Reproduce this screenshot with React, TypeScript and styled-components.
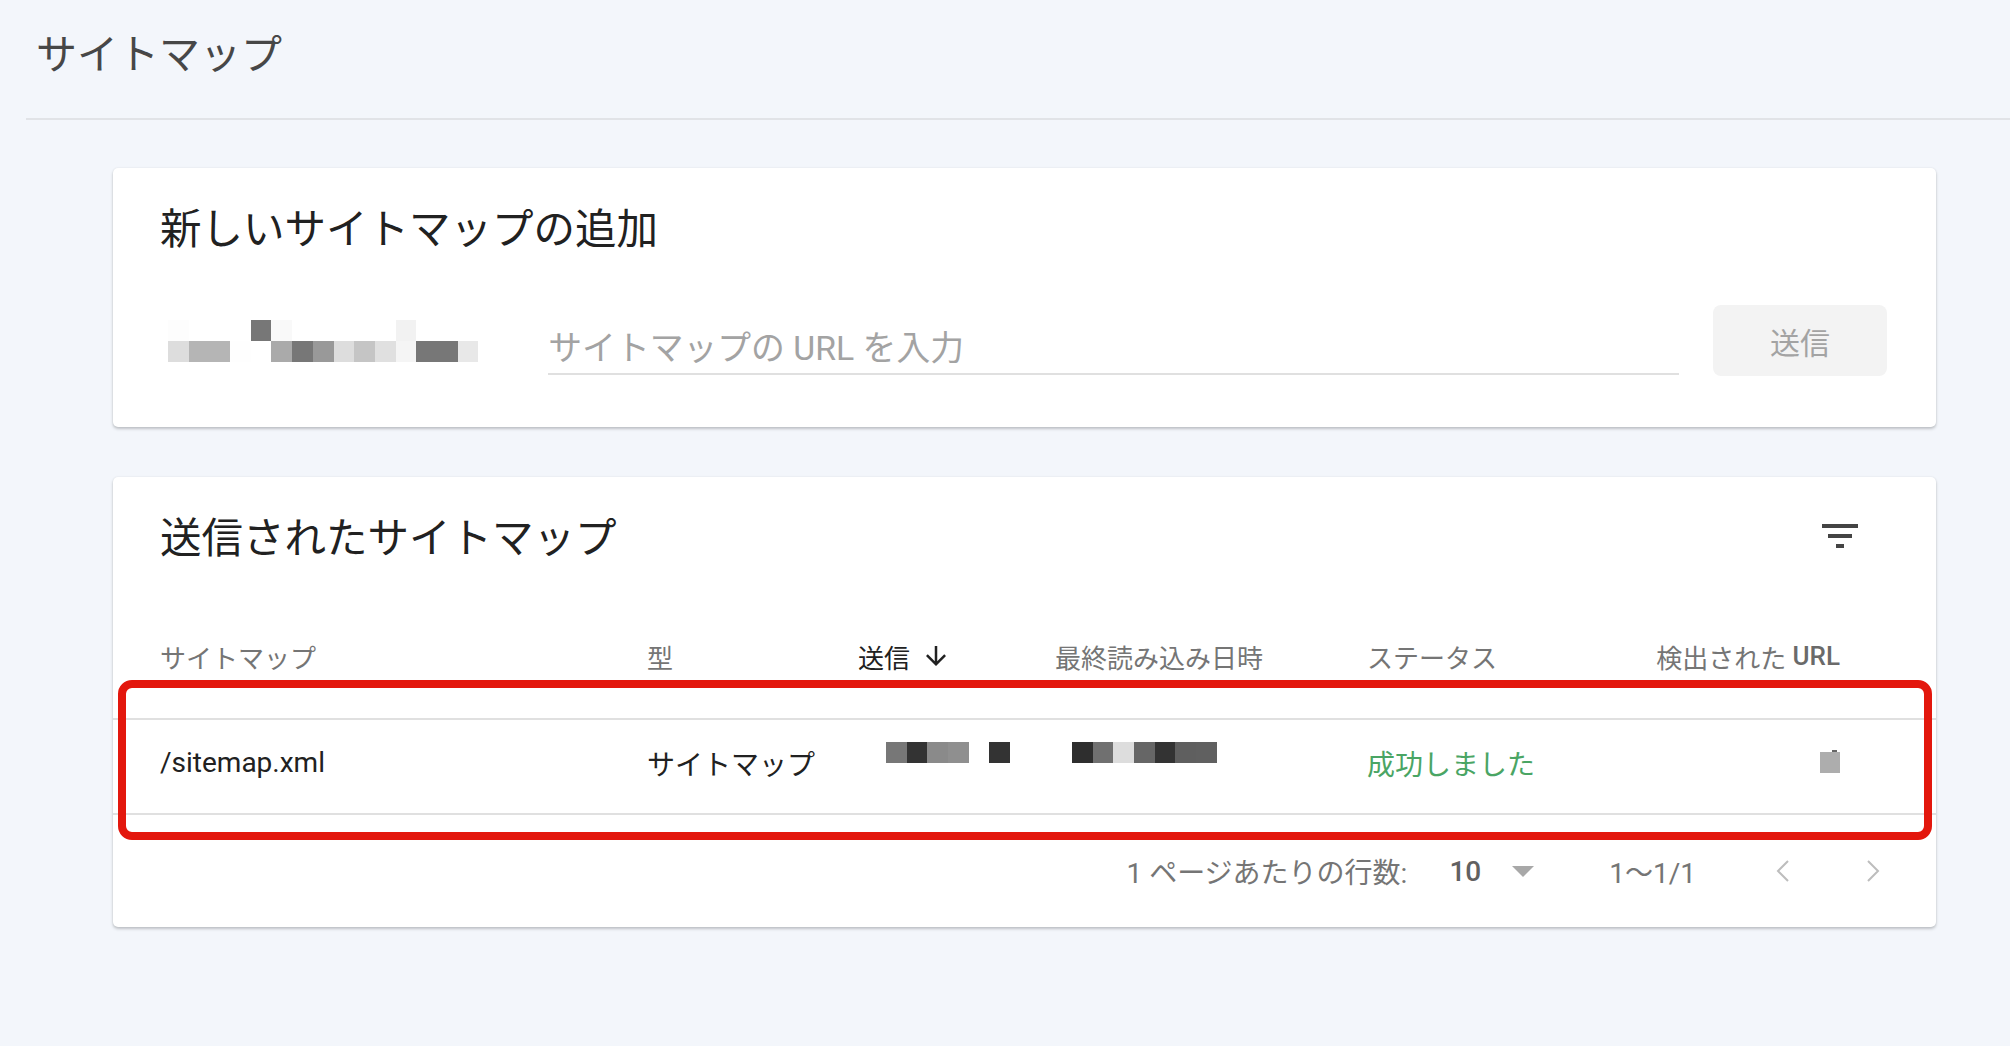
import React from "react";
import styled, { createGlobalStyle } from "styled-components";

const GlobalStyle = createGlobalStyle`
  body {
    margin: 0;
    background: #f3f6fb;
    font-family: Roboto, "Noto Sans CJK JP", sans-serif;
  }
`;

// blurred domain name in the "add" card, two rows of pixels
const domainRows = [
  ["#fdfdfd", "#fff", "#fff", "#fff", "#777", "#f9f9f9", "#fff", "#fff", "#fff", "#fff", "#fff", "#f2f2f2", "#fff", "#fff", "#fff"],
  ["#ddd", "#b5b5b5", "#b5b5b5", "#fefefe", "#fff", "#aaa", "#777", "#999", "#ddd", "#c5c5c5", "#e0e0e0", "#f5f5f5", "#777", "#777", "#e8e8e8"],
];

const sentPixels = ["#777", "#333", "#8a8a8a", "#8f8f8f", "#fff", "#333"];
const readPixels = ["#2e2e2e", "#707070", "#ddd", "#666", "#333", "#5f5f5f", "#606060"];

const columns = ["サイトマップ", "型", "送信", "最終読み込み日時", "ステータス"];

function App() {
  return (
    <Page>
      <GlobalStyle />
      <TopBar>
        <PageTitle>サイトマップ</PageTitle>
      </TopBar>

      <Main>
        <AddCard>
          <CardTitle>新しいサイトマップの追加</CardTitle>
          <InputRow>
            <Mosaic $cols={15}>
              {domainRows.flat().map((c, i) => (
                <Pixel key={i} $color={c} />
              ))}
            </Mosaic>
            <UrlInput placeholder="サイトマップの URL を入力" />
            <SubmitButton>送信</SubmitButton>
          </InputRow>
        </AddCard>

        <ListCard>
          <ListHeader>
            <CardTitle>送信されたサイトマップ</CardTitle>
            <FilterIcon viewBox="0 0 24 24">
              <path d="M10 18h4v-2h-4v2zM3 6v2h18V6H3zm3 7h12v-2H6v2z" />
            </FilterIcon>
          </ListHeader>

          <Row $height={118}>
            {columns.map((c) => (
              <HeadCell key={c} $active={c === "送信"}>
                {c}
                {c === "送信" && (
                  <SortArrow viewBox="0 0 24 24">
                    <path d="M20 12l-1.41-1.41L13 16.17V4h-2v12.17l-5.58-5.59L4 12l8 8 8-8z" />
                  </SortArrow>
                )}
              </HeadCell>
            ))}
            <HeadCell $active={false}>
              検出された <Strong>URL</Strong>
            </HeadCell>
          </Row>

          <Row $height={95}>
            <Cell>/sitemap.xml</Cell>
            <Cell>サイトマップ</Cell>
            <Cell>
              <Mosaic $cols={sentPixels.length} $offset={28} $lift>
                {sentPixels.map((c, i) => (
                  <Pixel key={i} $color={c} />
                ))}
              </Mosaic>
            </Cell>
            <Cell>
              <Mosaic $cols={readPixels.length} $offset={17} $lift>
                {readPixels.map((c, i) => (
                  <Pixel key={i} $color={c} />
                ))}
              </Mosaic>
            </Cell>
            <Status>成功しました</Status>
            <Cell>
              <CountBlock />
            </Cell>
          </Row>

          <Pager>
            <span>1 ページあたりの行数:</span>
            <PerPage>10</PerPage>
            <DropTriangle viewBox="0 0 22 11">
              <polygon points="0,0 22,0 11,11" />
            </DropTriangle>
            <Range>1〜1/1</Range>
            <Chevron viewBox="0 0 16 22" $gap={79}>
              <polyline points="13,1 3,11 13,21" />
            </Chevron>
            <Chevron viewBox="0 0 16 22" $gap={74}>
              <polyline points="3,1 13,11 3,21" />
            </Chevron>
          </Pager>

          <Highlight />
        </ListCard>
      </Main>
    </Page>
  );
}

const Page = styled.div`
  min-height: 1046px;
`;

const TopBar = styled.header`
  margin-left: 26px;
  height: 120px;
  box-sizing: border-box;
  padding: 31px 0 0 10px;
  border-bottom: 2px solid #e1e3e7;
`;

const PageTitle = styled.h1`
  margin: 0;
  font-size: 41px;
  font-weight: 400;
  line-height: 48px;
  color: #474747;
`;

const Main = styled.main`
  display: flex;
  flex-direction: column;
  gap: 50px;
  padding: 48px 74px 0 113px;
`;

const Card = styled.section`
  position: relative;
  background: #fff;
  border-radius: 5px;
  box-shadow: 0 2px 3px rgba(60, 64, 67, 0.28), 0 0 2px rgba(60, 64, 67, 0.1);
`;

const AddCard = styled(Card)`
  padding: 36px 49px 51px 47px;
`;

const CardTitle = styled.h2`
  margin: 0;
  font-size: 41.5px;
  font-weight: 400;
  line-height: 52px;
  color: #212121;
`;

const InputRow = styled.div`
  display: flex;
  align-items: center;
  height: 71px;
  margin-top: 49px;
`;

const Mosaic = styled.div<{ $cols: number; $offset?: number; $lift?: boolean }>`
  display: grid;
  grid-template-columns: repeat(${(p) => p.$cols}, 20.7px);
  grid-auto-rows: 21px;
  margin-left: ${(p) => p.$offset ?? 8}px;
  margin-bottom: ${(p) => (p.$lift ? 20 : 0)}px;
`;

const Pixel = styled.span<{ $color: string }>`
  background: ${(p) => p.$color};
`;

const UrlInput = styled.input`
  flex: 1;
  height: 48px;
  margin: 18px 0 0 70px;
  padding: 0;
  border: none;
  border-bottom: 2px solid #e0e0e0;
  outline: none;
  background: transparent;
  font-family: inherit;
  font-size: 33.8px;
  color: #212121;

  &::placeholder {
    color: #a3a3a3;
  }
`;

const SubmitButton = styled.button`
  width: 174px;
  height: 71px;
  margin-left: 34px;
  border: none;
  border-radius: 8px;
  background: #f3f3f3;
  color: #a3a3a3;
  font-family: inherit;
  font-size: 30px;
`;

const ListCard = styled(Card)``;

const ListHeader = styled.div`
  display: flex;
  justify-content: space-between;
  align-items: center;
  padding: 36px 72px 37px 47px;
`;

const FilterIcon = styled.svg`
  width: 48px;
  height: 48px;
  margin-top: -6px;
  fill: #444;
`;

const Row = styled.div<{ $height: number }>`
  display: grid;
  grid-template-columns: 487px 211px 197px 312px 1fr auto;
  align-items: center;
  height: ${(p) => p.$height}px;
  box-sizing: border-box;
  padding: 0 96px 8px 47px;
  border-bottom: 2px solid #e0e0e0;
`;

const HeadCell = styled.div<{ $active: boolean }>`
  display: flex;
  align-items: center;
  white-space: pre;
  font-size: 26px;
  color: ${(p) => (p.$active ? "#212121" : "#757575")};
`;

const Strong = styled.span`
  font-weight: 500;
  color: #6a6a6a;
`;

const SortArrow = styled.svg`
  width: 30px;
  height: 30px;
  margin-left: 11px;
  fill: #212121;
`;

const Cell = styled.div`
  display: flex;
  align-items: center;
  font-size: 28px;
  color: #212121;
`;

const Status = styled(Cell)`
  color: #4aa564;
`;

const CountBlock = styled.span`
  position: relative;
  width: 20px;
  height: 21px;
  background: #adadad;

  &::before {
    content: "";
    position: absolute;
    top: -2px;
    right: 3px;
    width: 5px;
    height: 2px;
    background: #666;
  }
`;

const Pager = styled.div`
  display: flex;
  justify-content: flex-end;
  align-items: center;
  height: 112px;
  padding-right: 55px;
  font-size: 28px;
  color: #757575;
`;

const PerPage = styled.span`
  margin-left: 42px;
  font-weight: 500;
  color: #616161;
`;

const DropTriangle = styled.svg`
  width: 22px;
  height: 11px;
  margin-left: 31px;
  fill: #a8a8a8;
`;

const Range = styled.span`
  margin-left: 75px;
`;

const Chevron = styled.svg<{ $gap: number }>`
  width: 16px;
  height: 22px;
  margin-left: ${(p) => p.$gap}px;
  fill: none;
  stroke: #bdbdbd;
  stroke-width: 2;
`;

// red annotation drawn over the submitted row
const Highlight = styled.div`
  position: absolute;
  left: 5px;
  top: 203px;
  width: 1814px;
  height: 160px;
  box-sizing: border-box;
  border: 8px solid #e3170d;
  border-radius: 14px;
  pointer-events: none;
`;

export default App;
